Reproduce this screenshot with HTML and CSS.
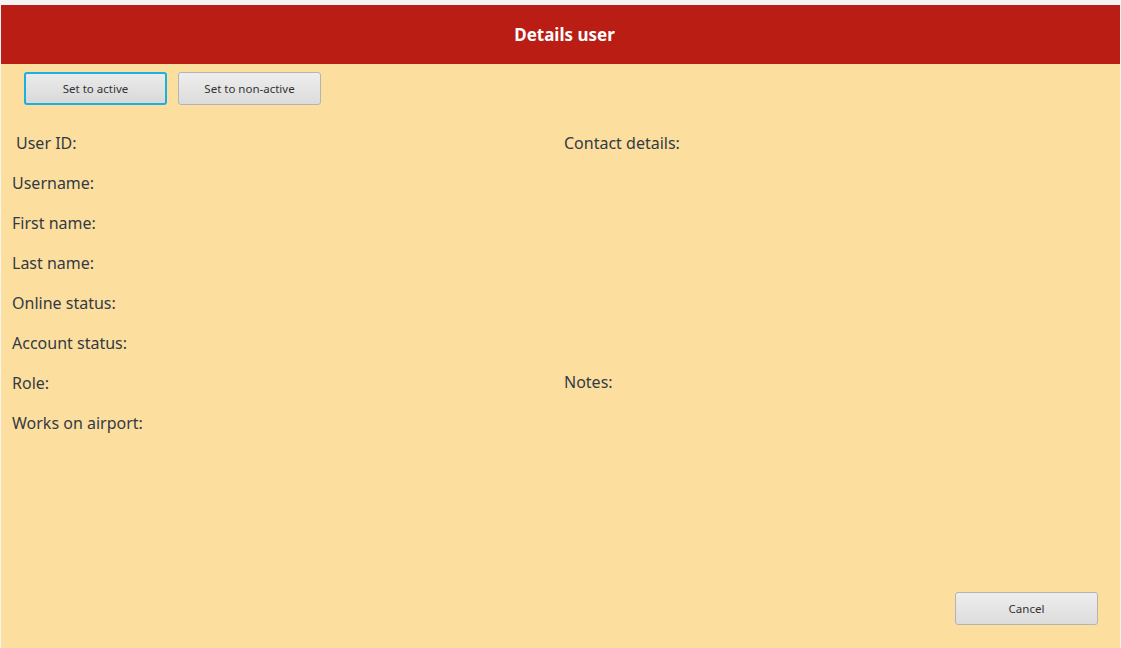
FILE: index.html
```html
<!DOCTYPE html>
<html>
<head>
<meta charset="utf-8">
<link rel="stylesheet" href="styles.css">
</head>
<body>
<div class="window">
  <div class="header">Details user</div>
  <div class="content">
    <div class="toolbar">
      <button class="btn focused">Set to active</button>
      <button class="btn">Set to non-active</button>
    </div>
    <div class="grid">
      <div class="left">
        <div class="label first">User ID:</div>
        <div class="label">Username:</div>
        <div class="label">First name:</div>
        <div class="label">Last name:</div>
        <div class="label">Online status:</div>
        <div class="label">Account status:</div>
        <div class="label">Role:</div>
        <div class="label">Works on airport:</div>
      </div>
      <div class="right">
        <div class="label">Contact details:</div>
        <div class="spacer"></div>
        <div class="label">Notes:</div>
      </div>
    </div>
    <div class="footer">
      <button class="btn cancel">Cancel</button>
    </div>
  </div>
</div>
</body>
</html>
```
FILE: styles.css
```css
html, body {
  margin: 0;
  padding: 0;
  height: 100%;
  background: #f4f4f4;
}
body {
  font-family: "Noto Sans", "Open Sans", sans-serif;
  padding-top: 5px;
  box-sizing: border-box;
}
.window {
  height: 643px;
  margin: 0 0 0 1px;
  width: 1119px;
  background: #fcdf9f;
  display: flex;
  flex-direction: column;
}
.header {
  height: 59px;
  background: #b91d14;
  color: #ffffff;
  font-weight: 700;
  font-size: 17px;
  display: flex;
  align-items: center;
  justify-content: center;
  padding-left: 8px;
  box-sizing: border-box;
}
.content {
  flex: 1;
  display: flex;
  flex-direction: column;
  padding: 8px 22px 23px 11px;
}
.toolbar {
  display: flex;
  gap: 11px;
  padding-left: 12px;
}
.btn {
  width: 143px;
  height: 33px;
  border: 1px solid #b4b4b4;
  border-radius: 3px;
  background: linear-gradient(#eeeeee, #dcdcdc);
  font-family: "Noto Sans", "Open Sans", sans-serif;
  font-size: 11.5px;
  color: #333333;
  padding: 0;
}
.btn.focused {
  border: 2px solid #1ab0e0;
  background: linear-gradient(#ebebeb, #d9d9d9);
}
.grid {
  display: flex;
  margin-top: 27px;
  flex: 1;
}
.left {
  width: 552px;
  display: flex;
  flex-direction: column;
}
.right {
  display: flex;
  flex-direction: column;
}
.label {
  height: 40px;
  line-height: 22px;
  font-size: 16px;
  color: #333a44;
}
.label.first {
  padding-left: 4px;
}
.spacer {
  height: 199px;
}
.footer {
  display: flex;
  justify-content: flex-end;
}
.cancel {
  width: 143px;
}
```
